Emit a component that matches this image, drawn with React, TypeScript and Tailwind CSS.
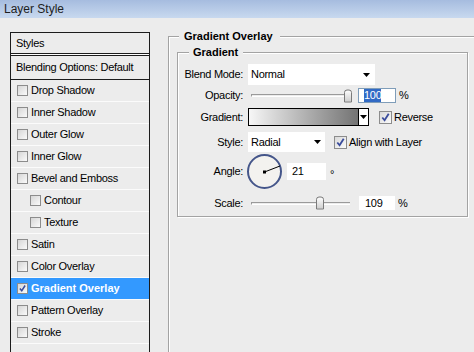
import React from 'react';

const styleItems: { label: string; indent?: boolean; checked?: boolean; selected?: boolean }[] = [
  { label: 'Drop Shadow' },
  { label: 'Inner Shadow' },
  { label: 'Outer Glow' },
  { label: 'Inner Glow' },
  { label: 'Bevel and Emboss' },
  { label: 'Contour', indent: true },
  { label: 'Texture', indent: true },
  { label: 'Satin' },
  { label: 'Color Overlay' },
  { label: 'Gradient Overlay', checked: true, selected: true },
  { label: 'Pattern Overlay' },
  { label: 'Stroke' },
];

function CheckMark({ size }: { size: number }) {
  return (
    <svg width={size} height={size} viewBox="0 0 12 12" className="block">
      <path d="M2.5 6 L5 9 L9.5 2" fill="none" stroke="#3a4c9c" strokeWidth="2" />
    </svg>
  );
}

function SmallBox({ checked }: { checked?: boolean }) {
  return (
    <div className="w-[11px] h-[11px] border border-[#8c8c8c] bg-gradient-to-br from-[#d6d6d6] to-[#fafafa] flex items-center justify-center shrink-0">
      {checked && <CheckMark size={9} />}
    </div>
  );
}

function BigBox({ checked }: { checked?: boolean }) {
  return (
    <div className="w-[13px] h-[13px] border border-[#8c8c8c] bg-gradient-to-br from-[#d9d9d9] to-[#fbfbfb] flex items-center justify-center shrink-0">
      {checked && <CheckMark size={11} />}
    </div>
  );
}

function Arrow() {
  return (
    <svg width="7" height="4" viewBox="0 0 7 4" className="block">
      <path d="M0 0 H7 L3.5 4 Z" fill="#000" />
    </svg>
  );
}

function Slider({ pos }: { pos: number }) {
  return (
    <div className="relative w-[104px] h-full flex items-center">
      <div className="ml-[3px] w-[99px] h-[3px] border-t border-[#9a9a9a] border-b border-b-white border-l border-l-[#9a9a9a]" />
      <div
        className="absolute top-1/2 -translate-y-1/2 w-[8px] h-[13px] rounded-t-[3px] border border-[#7a7a7a] bg-gradient-to-b from-[#fdfdfd] to-[#cfcfcf]"
        style={{ left: pos }}
      />
    </div>
  );
}

function Row({ label, className, children }: { label: string; className: string; children: React.ReactNode }) {
  return (
    <div className={`flex items-center ${className}`}>
      <div className="w-[65px] text-right">{label}</div>
      {children}
    </div>
  );
}

export default function App() {
  return (
    <div className="w-[474px] h-[352px] overflow-hidden bg-[#ececec] text-black text-[11px] tracking-[-0.3px] leading-[13px] font-['Liberation_Sans',Arial,sans-serif]">
      <div className="h-[18px] pl-[4px] flex items-center text-[12px] tracking-normal text-[#1e1e1e] bg-gradient-to-b from-[#a6bcdf] to-[#c8d9ef]">
        Layer Style
      </div>

      <div className="flex items-start">
        {/* style list */}
        <div className="ml-[10px] mt-[14px] w-[140px] h-[400px] border border-[#1c1c1c] shrink-0">
          <div className="h-[21px] pl-[5px] flex items-center border-b border-[#1c1c1c]">Styles</div>
          <div className="h-[1px] bg-white" />
          <div className="h-[25px] pl-[5px] flex items-center border-y border-[#1c1c1c]">Blending Options: Default</div>
          {styleItems.map(item => (
            <div key={item.label} className="border-b border-[#fbfbfb]">
              <div
                className={`h-[21px] flex items-center gap-[3px] ${item.indent ? 'pl-[19px]' : 'pl-[6px]'} ${
                  item.selected ? 'bg-[#3399ff] text-white font-bold tracking-normal' : ''
                }`}
              >
                <SmallBox checked={item.checked} />
                <span>{item.label}</span>
              </div>
            </div>
          ))}
        </div>

        {/* options */}
        <fieldset className="ml-[18px] mt-[12px] w-[330px] h-[420px] border border-[#a3a3a3] shadow-[inset_1px_1px_0_#fff,1px_1px_0_#fff] p-0 shrink-0">
          <legend className="ml-[10px] pl-[5px] pr-[7px] font-bold tracking-normal leading-[12px] bg-[#ececec]">
            Gradient Overlay
          </legend>
          <div className="pl-[8px] pt-[4px]">
            <fieldset className="w-[291px] border border-[#a3a3a3] shadow-[inset_1px_1px_0_#fff,1px_1px_0_#fff] p-0">
              <legend className="ml-[11px] pl-[4px] pr-[5px] font-bold tracking-normal leading-[12px] bg-[#ececec]">
                Gradient
              </legend>
              <div className="pt-[6px] pb-[6px] flex flex-col">
                <Row label="Blend Mode:" className="h-[21px]">
                  <div className="ml-[5px] w-[127px] h-full bg-white flex items-center justify-between pl-[3px] pr-[5px]">
                    <span>Normal</span>
                    <Arrow />
                  </div>
                </Row>

                <Row label="Opacity:" className="mt-[3px] h-[15px]">
                  <div className="ml-[5px] h-full">
                    <Slider pos={96} />
                  </div>
                  <div className="ml-[6px] w-[38px] h-full bg-white border border-[#7f9db9] flex items-center pl-[5px]">
                    <span className="bg-[#316ac5] text-white">100</span>
                  </div>
                  <span className="ml-[3px]">%</span>
                </Row>

                <Row label="Gradient:" className="mt-[5px] h-[18px]">
                  <div className="ml-[5px] w-[121px] h-full border border-black flex">
                    <div className="flex-1 bg-gradient-to-r from-[#f7f7f7] to-[#747474]" />
                    <div className="w-[10px] border-l border-black bg-white flex items-center justify-center">
                      <Arrow />
                    </div>
                  </div>
                  <div className="ml-[10px]">
                    <BigBox checked />
                  </div>
                  <span className="ml-[2px]">Reverse</span>
                </Row>

                <Row label="Style:" className="mt-[6px] h-[20px]">
                  <div className="ml-[5px] w-[77px] h-full bg-white flex items-center justify-between pl-[3px] pr-[4px]">
                    <span>Radial</span>
                    <Arrow />
                  </div>
                  <div className="ml-[9px]">
                    <BigBox checked />
                  </div>
                  <span className="ml-[2px]">Align with Layer</span>
                </Row>

                <Row label="Angle:" className="mt-[2px] h-[35px]">
                  <svg width="37" height="37" viewBox="0 0 37 37" className="ml-[3px] block">
                    <circle cx="18.5" cy="18.5" r="16.5" fill="#f3f2ef" stroke="#45568a" strokeWidth="2" />
                    <line x1="18.5" y1="19" x2="34" y2="13" stroke="#000" strokeWidth="1" />
                    <rect x="17" y="17.5" width="3" height="3" fill="#000" />
                  </svg>
                  <div className="ml-[4px] w-[39px] h-[17px] bg-white flex items-center pl-[5px]">21</div>
                  <span className="ml-[4px] self-start mt-[14px] leading-[13px]">°</span>
                </Row>

                <Row label="Scale:" className="mt-[7px] h-[14px]">
                  <div className="ml-[5px] h-full">
                    <Slider pos={68} />
                  </div>
                  <div className="ml-[7px] w-[36px] h-full bg-white flex items-center pl-[6px]">109</div>
                  <span className="ml-[3px]">%</span>
                </Row>
              </div>
            </fieldset>
          </div>
        </fieldset>
      </div>
    </div>
  );
}
